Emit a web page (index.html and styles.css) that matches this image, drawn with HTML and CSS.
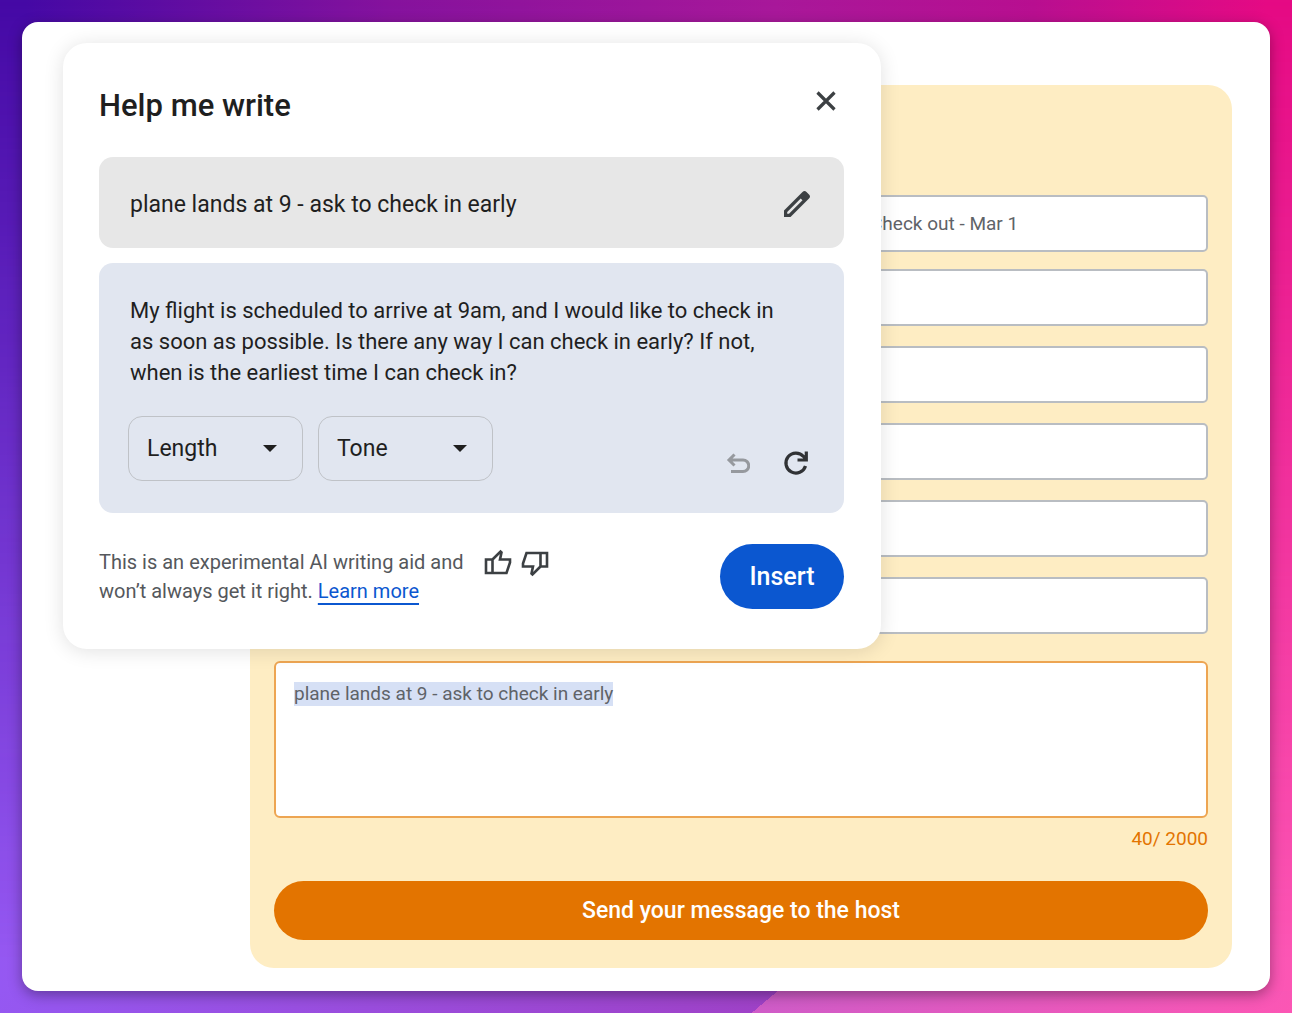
FILE: index.html
```html
<!doctype html>
<html lang="en">
  <head>
    <meta charset="UTF-8" />
    <meta name="viewport" content="width=device-width, initial-scale=1.0" />
    <title>Help me write</title>
    <link rel="stylesheet" href="styles.css">
  </head>
  <body>
    <main class="stage">
      <form class="host-form">
        <div class="fields">
          <div class="dates">
            <input class="field" type="text" aria-label="Check in" />
            <input class="field" type="text" aria-label="Check out" value="Check out - Mar 1" />
          </div>
          <input class="field" type="text" aria-label="First name" />
          <input class="field" type="text" aria-label="Last name" />
          <input class="field" type="text" aria-label="Email" />
          <input class="field" type="text" aria-label="Phone" />
          <input class="field" type="text" aria-label="Guests" />
        </div>
        <textarea class="message" id="message" aria-label="Message">plane lands at 9 - ask to check in early</textarea>
        <div class="counter">40/ 2000</div>
        <button class="send" type="button">Send your message to the host</button>
      </form>

      <section class="dialog" role="dialog" aria-labelledby="dialog-title">
        <header class="dialog-header">
          <h1 class="title" id="dialog-title">Help me write</h1>
          <button class="icon-btn" type="button" aria-label="Close">
            <svg width="22" height="22" viewBox="0 0 22 22">
              <path d="M2.500 2.500l17 17M19.500 2.500l-17 17" fill="none" stroke="#3c4043" stroke-width="3.200" />
            </svg>
          </button>
        </header>

        <div class="prompt">
          <span>plane lands at 9 - ask to check in early</span>
          <button class="icon-btn" type="button" aria-label="Edit prompt">
            <svg width="30" height="30" viewBox="0 0 30 30">
              <path fill="#3c4043" fill-rule="evenodd" d="M2 28v-6.500L20.500 3q2-2 4 0l2.500 2.500q2 2 0 4L8.500 28zM5.200 24.800h1.800L20.500 11.300l-1.800-1.800L5.200 23z" />
            </svg>
          </button>
        </div>

        <div class="result">
          <p class="result-text">My flight is scheduled to arrive at 9am, and I would like to check in<br />as soon as possible. Is there any way I can check in early? If not,<br />when is the earliest time I can check in?</p>
          <div class="result-bar">
            <div class="select-wrap">
              <select class="select" aria-label="Length"><option>Length</option></select>
            </div>
            <div class="select-wrap">
              <select class="select" aria-label="Tone"><option>Tone</option></select>
            </div>
            <div class="history">
              <button class="icon-btn" type="button" aria-label="Undo">
                <svg width="24" height="24" viewBox="0 0 24 24">
                  <path d="M8.500 2.500L3 8l5.500 5.500M3.500 8H17a5.500 5.500 0 0 1 0 11.500H5" fill="none" stroke="#96999e" stroke-width="3" />
                </svg>
              </button>
              <button class="icon-btn" type="button" aria-label="Regenerate">
                <svg width="26" height="26" viewBox="0 0 26 26">
                  <path d="M22.500 16a10 10 0 1 1-2-9.500L23 9M23.300 1.500V10H14.500" fill="none" stroke="#303235" stroke-width="3.200" />
                </svg>
              </button>
            </div>
          </div>
        </div>

        <footer class="dialog-footer">
          <p class="note">This is an experimental AI writing aid and<br />won’t always get it right. <a class="link" href="#">Learn more</a></p>
          <div class="votes">
            <button class="icon-btn" type="button" aria-label="Good suggestion">
              <svg width="28" height="28" viewBox="0 0 28 28">
                <path d="M2 10.500h6.500V24H2zM8.500 10.500L16.500 2.500l1 1-1.500 7H26v3L22.500 24h-14" fill="none" stroke="#3c4043" stroke-width="2.600" />
              </svg>
            </button>
            <button class="icon-btn" type="button" aria-label="Bad suggestion">
              <svg width="28" height="28" viewBox="0 0 28 28">
                <path d="M26 17.500h-6.500V4H26zM19.500 17.500l-8 8-1-1 1.500-7H2v-3L5.500 4h14" fill="none" stroke="#3c4043" stroke-width="2.600" />
              </svg>
            </button>
          </div>
          <button class="insert" type="button">Insert</button>
        </footer>
      </section>
    </main>

    <script>
      const message = document.getElementById('message');
      message.focus({ preventScroll: true });
      message.select();
    </script>
  </body>
</html>
```

FILE: styles.css
```css
* {
  box-sizing: border-box;
}
body {
  position: relative;
  margin: 0;
  min-height: 100vh;
  padding: 22px;
  font-family: Roboto, Arial, sans-serif;
  color: #1f1f1f;
  background: linear-gradient(to right, #4509a5 2%, #85129d 30%, #a8189a 60%, #b80f90 80%, #e50a84 98%);
}
/* lighter colours fading in towards the bottom of the page */
body::before {
  content: "";
  position: absolute;
  inset: 0;
  z-index: -1;
  background:
    linear-gradient(140deg, #9558f2, #9f42c8 59%, #cf5cc8 59%, #fc56b4) bottom / 100% 22px no-repeat,
    linear-gradient(to right, #9558f2, #fc56b4);
  mask-image: linear-gradient(to bottom, transparent, #000 95%);
}
button,
input,
select,
textarea {
  font-family: inherit;
}

/* both cards share one grid cell, the dialog overlaps the form */
.stage {
  display: grid;
  background: #fff;
  border-radius: 16px;
  box-shadow: 0 4px 14px rgba(0, 0, 0, 0.35);
}
.host-form,
.dialog {
  grid-area: 1 / 1;
}

.host-form {
  margin: 63px 38px 23px 228px;
  padding: 110px 24px 28px;
  background: #feedc3;
  border-radius: 24px;
}
.fields {
  display: flex;
  flex-direction: column;
  gap: 20px;
}
.dates {
  display: grid;
  grid-template-columns: 560px 1fr;
  gap: 16px;
  margin-bottom: -3px;
}
.field {
  width: 100%;
  height: 57px;
  padding: 0 18px;
  font-size: 19px;
  color: #5f6368;
  background: #fff;
  border: 2px solid #b9bdc2;
  border-radius: 5px;
}
.message {
  display: block;
  width: 100%;
  height: 157px;
  margin-top: 27px;
  padding: 19px 18px;
  font-size: 19px;
  line-height: 24px;
  color: #5f6368;
  background: #fff;
  border: 2px solid #eda552;
  border-radius: 6px;
  outline: none;
  resize: none;
}
.message::selection {
  color: #5f6368;
  background: #d6e0f5;
}
.counter {
  margin: 8px 0 29px;
  font-size: 19px;
  line-height: 26px;
  color: #e37400;
  text-align: right;
}
.send {
  width: 100%;
  height: 59px;
  font-size: 23px;
  font-weight: 500;
  color: #fff;
  background: #e37400;
  border: 0;
  border-radius: 30px;
}

.dialog {
  align-self: start;
  margin: 21px 389px 0 41px;
  padding: 36px 37px 40px 36px;
  background: #fff;
  border-radius: 24px;
  box-shadow: 0 2px 20px rgba(0, 0, 0, 0.12);
}
.dialog-header {
  display: flex;
  align-items: flex-start;
  justify-content: space-between;
  height: 52px;
  margin-bottom: 26px;
  padding: 11px 7px 0 0;
}
.title {
  margin: 0;
  font-size: 31px;
  font-weight: 500;
  line-height: 32px;
}
.icon-btn {
  display: flex;
  padding: 0;
  background: none;
  border: 0;
}
.prompt {
  display: flex;
  align-items: center;
  justify-content: space-between;
  height: 91px;
  margin-bottom: 15px;
  padding: 3px 32px 0 31px;
  font-size: 23px;
  background: #e7e7e7;
  border-radius: 14px;
}
.result {
  padding: 32px 32px 32px 29px;
  background: #e1e6f0;
  border-radius: 14px;
}
.result-text {
  margin: 0 0 28px 2px;
  font-size: 22px;
  line-height: 31px;
}
.result-bar {
  display: flex;
  gap: 15px;
}
.select-wrap {
  position: relative;
  width: 175px;
}
.select-wrap::after {
  content: "";
  position: absolute;
  top: 29px;
  right: 26px;
  border: 7px solid transparent;
  border-top-color: #1f1f1f;
  border-bottom: 0;
  pointer-events: none;
}
.select {
  appearance: none;
  width: 100%;
  height: 65px;
  padding: 0 18px;
  font-size: 23px;
  color: #1f1f1f;
  background: transparent;
  border: 1px solid #bfc2c7;
  border-radius: 14px;
}
.history {
  display: flex;
  align-items: flex-end;
  gap: 33px;
  margin-left: auto;
  padding: 0 3px 5px 0;
}
.dialog-footer {
  display: flex;
  align-items: flex-start;
  padding-top: 31px;
}
.note {
  margin: 4px 0 0;
  font-size: 20px;
  line-height: 29px;
  color: #55585c;
}
.link {
  color: #0b57d0;
  text-underline-offset: 5px;
}
.votes {
  display: flex;
  gap: 9px;
  margin: 5px 0 0 20px;
}
.insert {
  width: 124px;
  height: 65px;
  margin-left: auto;
  font-size: 25px;
  font-weight: 500;
  color: #fff;
  background: #0b57d0;
  border: 0;
  border-radius: 33px;
}
```
